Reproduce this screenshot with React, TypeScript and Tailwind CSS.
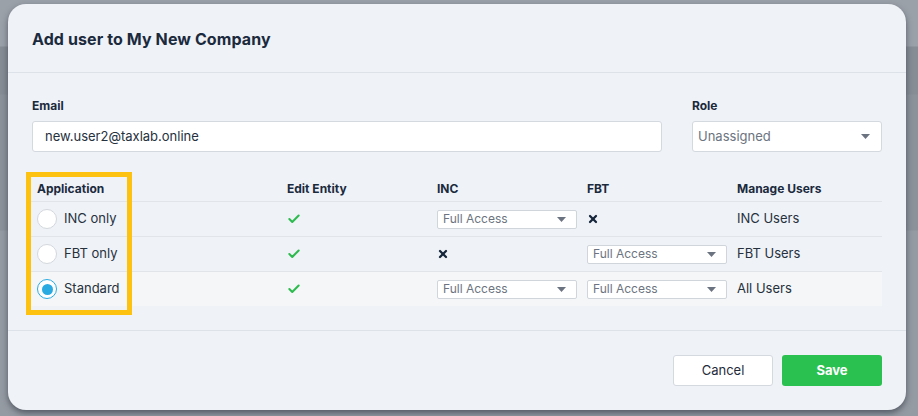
import { Check, X } from "lucide-react";

type Access = "select" | "none";

const rows: { app: string; selected: boolean; inc: Access; fbt: Access; manage: string }[] = [
  { app: "INC only", selected: false, inc: "select", fbt: "none", manage: "INC Users" },
  { app: "FBT only", selected: false, inc: "none", fbt: "select", manage: "FBT Users" },
  { app: "Standard", selected: true, inc: "select", fbt: "select", manage: "All Users" },
];

function Caret() {
  return (
    <svg width="9" height="5" viewBox="0 0 9 5" className="shrink-0">
      <path d="M0 0h9L4.5 5z" fill="#6b7280" />
    </svg>
  );
}

function SmallSelect() {
  return (
    <div className="flex h-[19px] w-[140px] items-center justify-between rounded-[2px] border border-[#cfd5db] bg-white pl-[5px] pr-[10px]">
      <span className="text-[12px] text-[#6b7480]">Full Access</span>
      <Caret />
    </div>
  );
}

function Radio({ checked }: { checked: boolean }) {
  return checked ? (
    <span className="flex h-[20px] w-[20px] items-center justify-center rounded-full border-[1.5px] border-[#29abe2] bg-white">
      <span className="h-[11px] w-[11px] rounded-full bg-[#29abe2]" />
    </span>
  ) : (
    <span className="h-[20px] w-[20px] rounded-full border border-[#d3d8de] bg-white" />
  );
}

export default function App() {
  return (
    <div
      className="h-[416px] w-[918px] overflow-hidden bg-[linear-gradient(180deg,#9ba1a9_0px,#9ba1a9_46px,#868d95_47px,#868d95_94px,#8b929a_95px,#8b929a_230px,#959ba3_231px,#959ba3_416px)] pl-[8px] pt-[4px]"
      style={{ fontFamily: "Inter, 'Liberation Sans', sans-serif" }}
    >
      <div className="flex h-[406px] w-[898px] flex-col rounded-[18px] bg-[#eff2f7] text-[#1f2b3a] shadow-[0_3px_6px_rgba(30,35,45,0.55)]">
        <div className="flex h-[69px] items-center border-b border-[#dde2e8] px-[24px] pt-[2px]">
          <h2 className="text-[16px] font-bold tracking-[0.1px] text-[#1b2a3d]">Add user to My New Company</h2>
        </div>

        <div className="px-[24px] pt-[25px]">
          <div className="flex gap-[30px]">
            <div className="w-[630px]">
              <div className="mb-[7px] text-[12px] font-bold leading-[16px] text-[#1b2a3d]">Email</div>
              <div className="flex h-[31px] items-center rounded-[3px] border border-[#d3d9df] bg-white px-[12px] text-[13px] text-[#26313d]">
                new.user2@taxlab.online
              </div>
            </div>
            <div className="w-[190px]">
              <div className="mb-[7px] text-[12px] font-bold leading-[16px] text-[#1b2a3d]">Role</div>
              <div className="flex h-[31px] items-center justify-between rounded-[3px] border border-[#d3d9df] bg-white pl-[5px] pr-[11px] text-[13px] text-[#6b7480]">
                <span>Unassigned</span>
                <Caret />
              </div>
            </div>
          </div>

          <div className="relative mt-[21px] w-[854px] -ml-[4px]">
            <div className="grid h-[28px] grid-cols-[250px_150px_150px_150px_154px] items-center pt-[3px] text-[12px] font-bold text-[#1b2a3d]">
              <div className="pl-[9px]">Application</div>
              <div className="pl-[9px]">Edit Entity</div>
              <div className="pl-[9px]">INC</div>
              <div className="pl-[9px]">FBT</div>
              <div className="pl-[9px]">Manage Users</div>
            </div>
            {rows.map((r, i) => (
              <div
                key={r.app}
                className={`grid h-[35px] grid-cols-[250px_150px_150px_150px_154px] items-center border-t border-[#e1e5ea] text-[13px] text-[#26313d] ${
                  i === 2 ? "bg-[#f4f6f7]" : ""
                }`}
              >
                <div className="flex items-center gap-[7px] pl-[9px]">
                  <Radio checked={r.selected} />
                  <span>{r.app}</span>
                </div>
                <div className="pl-[9px]">
                  <Check size={14} strokeWidth={3.5} className="text-[#2dba4e]" />
                </div>
                <div className="pl-[9px]">
                  {r.inc === "select" ? <SmallSelect /> : <X size={12} strokeWidth={4.5} className="text-[#15263a]" />}
                </div>
                <div className="pl-[9px]">
                  {r.fbt === "select" ? <SmallSelect /> : <X size={12} strokeWidth={4.5} className="text-[#15263a]" />}
                </div>
                <div className="pl-[9px]">{r.manage}</div>
              </div>
            ))}
            <div className="pointer-events-none absolute left-[-2px] top-[-1px] h-[143px] w-[106px] border-[5px] border-[#fdc20f]" />
          </div>
        </div>

        <div className="mt-[24px] flex justify-end gap-[9px] border-t border-[#dde2e8] px-[24px] pt-[24px]">
          <button className="h-[31px] w-[100px] rounded-[3px] border border-[#d3d9df] bg-white text-[13px] text-[#1f2b3a]">
            Cancel
          </button>
          <button className="h-[31px] w-[100px] rounded-[3px] bg-[#2bc150] text-[13px] font-bold text-white">Save</button>
        </div>
      </div>
    </div>
  );
}
